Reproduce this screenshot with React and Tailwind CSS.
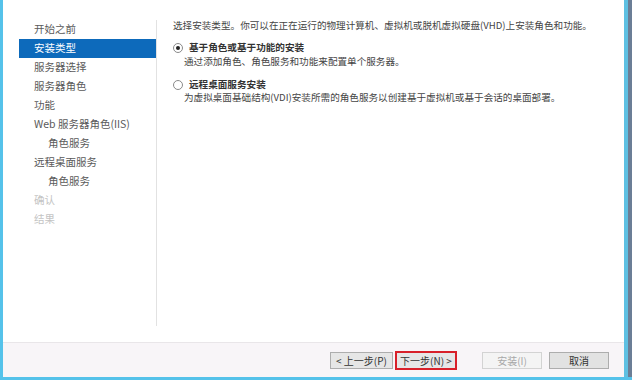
import React from "react";

const font = { fontFamily: '"Microsoft YaHei", "Noto Sans CJK SC", sans-serif' };

const steps = [
  { label: "开始之前" },
  { label: "安装类型", active: true },
  { label: "服务器选择" },
  { label: "服务器角色" },
  { label: "功能" },
  { label: "Web 服务器角色(IIS)" },
  { label: "角色服务", indent: true },
  { label: "远程桌面服务" },
  { label: "角色服务", indent: true },
  { label: "确认", disabled: true },
  { label: "结果", disabled: true },
];

const Radio = ({ checked }) => (
  <span className="w-[10px] h-[10px] rounded-full border border-[#8a8a8a] bg-white flex items-center justify-center shrink-0">
    {checked && <span className="w-[4px] h-[4px] rounded-full bg-[#222]"></span>}
  </span>
);

export default function App() {
  return (
    <div
      className="w-[632px] h-[380px] flex flex-col bg-white text-[10.5px] leading-none"
      style={font}
    >
      <div className="flex flex-1 min-h-0">
        {/* left window border */}
        <div className="w-[3px] bg-[#55c2ea]"></div>

        <div className="flex-1 flex flex-col min-w-0">
          <div className="flex-1 flex min-h-0">
            {/* Sidebar */}
            <div className="w-[153px] pt-[20px] pl-[16px] flex flex-col">
              {steps.map((s, i) => (
                <div
                  key={i}
                  className={
                    "h-[19px] flex items-center " +
                    (s.indent ? "pl-[29px] " : "pl-[15px] ") +
                    (s.active
                      ? "bg-[#0d6abb] text-white"
                      : s.disabled
                      ? "text-[#c4c4c4]"
                      : "text-[#5a5a5a]")
                  }
                >
                  {s.label}
                </div>
              ))}
            </div>

            {/* divider */}
            <div className="pt-[20px] pb-[16px] flex">
              <div className="w-px bg-[#e2e2e2]"></div>
            </div>

            {/* Main content */}
            <div className="flex-1 pl-[16px] pt-[21px] text-[#444] text-[9.6px]">
              <div className="h-[10px] flex items-center">
                选择安装类型。你可以在正在运行的物理计算机、虚拟机或脱机虚拟硬盘(VHD)上安装角色和功能。
              </div>

              <div className="mt-[12px] flex items-center gap-[6px]">
                <Radio checked />
                <span className="font-bold text-[#333]">基于角色或基于功能的安装</span>
              </div>
              <div className="mt-[4px] pl-[11px] h-[10px] flex items-center">
                通过添加角色、角色服务和功能来配置单个服务器。
              </div>

              <div className="mt-[13px] flex items-center gap-[6px]">
                <Radio />
                <span className="font-bold text-[#333]">远程桌面服务安装</span>
              </div>
              <div className="mt-[3px] pl-[11px] h-[10px] flex items-center">
                为虚拟桌面基础结构(VDI)安装所需的角色服务以创建基于虚拟机或基于会话的桌面部署。
              </div>
            </div>
          </div>

          {/* Footer */}
          <div className="h-[35px] border-t border-[#e9e6e9] bg-[#f8f5f8] flex items-center justify-end pr-[15px] pt-[1px] text-[10px]">
            <div className="flex items-center">
              <button className="w-[63px] h-[17px] border border-[#adadad] bg-[#e6e6e6] text-[#333] flex items-center justify-center">
                &lt; 上一步(P)
              </button>
              <div className="ml-[2px] border-2 border-[#d8202a]">
                <button className="w-[58px] h-[15px] bg-[#e6e6e6] text-[#333] flex items-center justify-center">
                  下一步(N) &gt;
                </button>
              </div>
              <button className="ml-[25px] w-[60px] h-[17px] border border-[#d3d3d3] bg-[#f4f4f4] text-[#a8a8a8] flex items-center justify-center">
                安装(I)
              </button>
              <button className="ml-[7px] w-[60px] h-[17px] border border-[#adadad] bg-[#e2e2e2] text-[#333] flex items-center justify-center">
                取消
              </button>
            </div>
          </div>
        </div>

        {/* right window border */}
        <div className="w-[4px] bg-[#5ec0e2]"></div>
        <div className="w-[4px] bg-[#6b7e96]"></div>
      </div>
      <div className="h-[3px] bg-[#55c2ea]"></div>
    </div>
  );
}
